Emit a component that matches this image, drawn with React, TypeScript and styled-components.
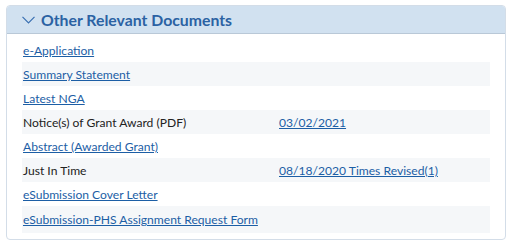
import styled, { createGlobalStyle } from "styled-components";

const Global = createGlobalStyle`
  body {
    margin: 0;
    background: #ffffff;
    font-family: Lato, "Open Sans", sans-serif;
  }
`;

const Panel = styled.section`
  margin: 5px 0 0 6px;
  width: 498px;
  border: 1px solid #d3dde8;
  border-radius: 4px;
  overflow: hidden;
  background: #fff;
`;

const Header = styled.div`
  height: 27px;
  display: flex;
  align-items: center;
  gap: 6px;
  padding-left: 15px;
  background: #d1e1f0;
  border-bottom: 1px solid #b9c8d7;
`;

const Title = styled.h2`
  margin: 0;
  font-size: 15.8px;
  font-weight: 700;
  color: #2b62a3;
`;

const Body = styled.div`
  padding: 4px 15px 6px 15px;
`;

const Row = styled.div<{ $alt?: boolean; $tall?: boolean }>`
  display: grid;
  grid-template-columns: 256px 1fr;
  align-items: center;
  height: ${(p) => (p.$tall ? "27px" : "24px")};
  padding-left: 1px;
  background: ${(p) => (p.$alt ? "#f5f7f9" : "transparent")};
  font-size: 12.1px;
  color: #222;
  white-space: nowrap;
`;

const Link = styled.a`
  color: #1c5ea5;
  text-decoration: underline;
  cursor: pointer;
`;

const Label = styled.span``;

type Item = { label: string; link?: boolean; value?: string };

const items: Item[] = [
  { label: "e-Application", link: true },
  { label: "Summary Statement", link: true },
  { label: "Latest NGA", link: true },
  { label: "Notice(s) of Grant Award (PDF)", value: "03/02/2021" },
  { label: "Abstract (Awarded Grant)", link: true },
  { label: "Just In Time", value: "08/18/2020 Times Revised(1)" },
  { label: "eSubmission Cover Letter", link: true },
  { label: "eSubmission-PHS Assignment Request Form", link: true },
];

function Chevron() {
  return (
    <svg width="13" height="8" viewBox="0 0 13 8">
      <polyline points="0.5,0.8 6.5,6.8 12.5,0.8" fill="none" stroke="#3a70b2" strokeWidth="1.2" />
    </svg>
  );
}

export default function App() {
  return (
    <>
      <Global />
      <Panel>
        <Header>
          <Chevron />
          <Title>Other Relevant Documents</Title>
        </Header>
        <Body>
          {items.map((it, i) => (
            <Row key={it.label} $alt={i % 2 === 1} $tall={i === items.length - 1}>
              <div>{it.link ? <Link>{it.label}</Link> : <Label>{it.label}</Label>}</div>
              <div>{it.value ? <Link>{it.value}</Link> : null}</div>
            </Row>
          ))}
        </Body>
      </Panel>
    </>
  );
}
